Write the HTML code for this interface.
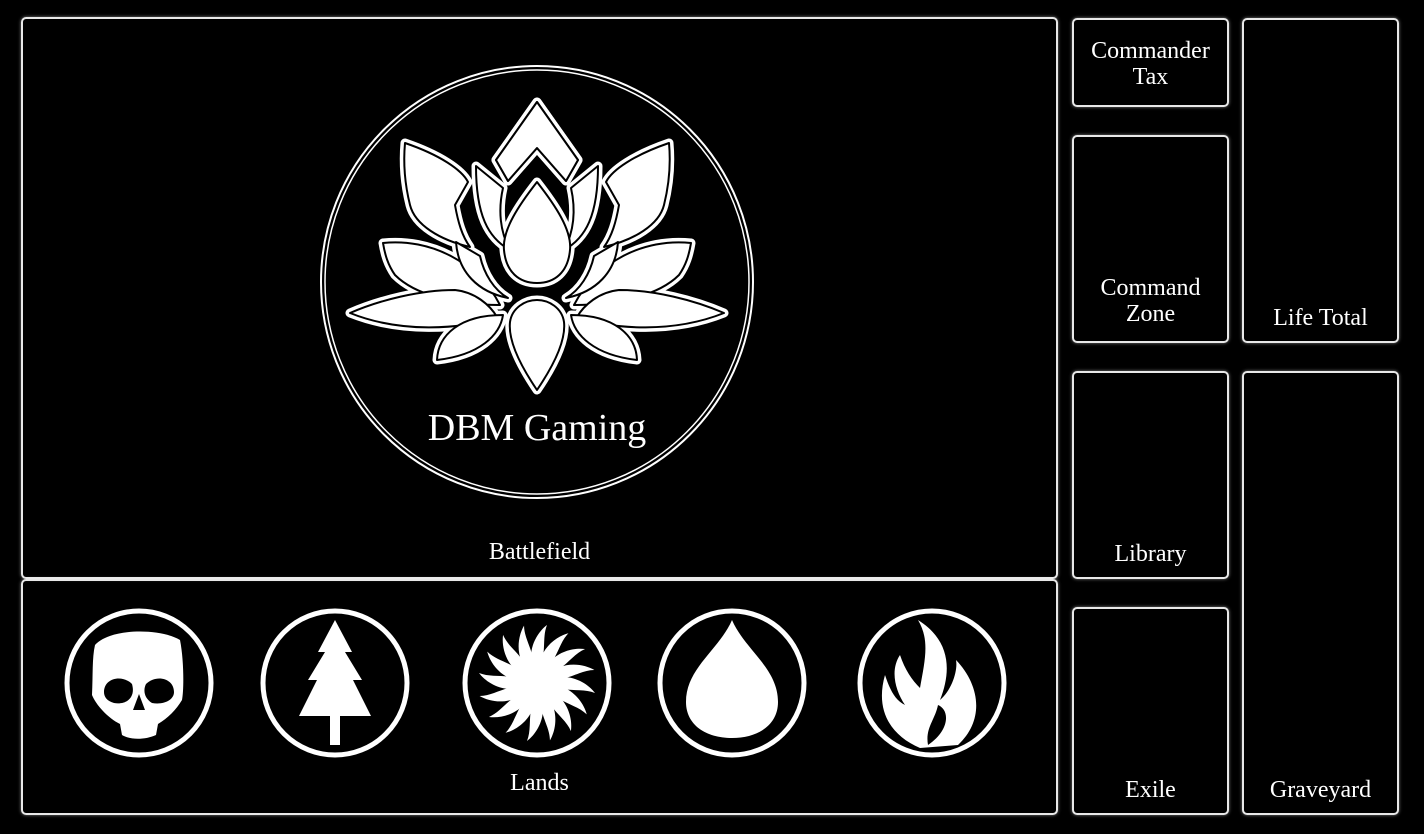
<!DOCTYPE html>
<html><head><meta charset="utf-8"><style>
html,body{margin:0;padding:0;background:#000;}
body{width:1424px;height:834px;position:relative;overflow:hidden;font-family:"Liberation Serif",serif;color:#fff;}
.b{position:absolute;border:2px solid #e8e8e8;border-radius:5px;box-shadow:0 0 3px rgba(255,255,255,.5);box-sizing:border-box;}
.t{position:absolute;width:100%;text-align:center;font-size:24px;line-height:26px;}
</style></head><body>
<div class="b" style="left:21px;top:17px;width:1037px;height:562px;"><div class="t" style="top:520px;">Battlefield</div></div>
<div class="b" style="left:21px;top:579px;width:1037px;height:236px;"><div class="t" style="top:189px;">Lands</div></div>
<div class="b" style="left:1072px;top:18px;width:157px;height:89px;"><div class="t" style="top:18px;">Commander<br>Tax</div></div>
<div class="b" style="left:1072px;top:135px;width:157px;height:208px;"><div class="t" style="top:138px;">Command<br>Zone</div></div>
<div class="b" style="left:1242px;top:18px;width:157px;height:325px;"><div class="t" style="top:285px;">Life Total</div></div>
<div class="b" style="left:1072px;top:371px;width:157px;height:208px;"><div class="t" style="top:168px;">Library</div></div>
<div class="b" style="left:1242px;top:371px;width:157px;height:444px;"><div class="t" style="top:404px;">Graveyard</div></div>
<div class="b" style="left:1072px;top:607px;width:157px;height:208px;"><div class="t" style="top:168px;">Exile</div></div>
<svg width="1424" height="834" style="position:absolute;left:0;top:0" xmlns="http://www.w3.org/2000/svg">
<circle cx="537" cy="282" r="216" fill="none" stroke="#fff" stroke-width="2"/>
<circle cx="537" cy="282" r="212" fill="none" stroke="#fff" stroke-width="1.5"/>
<defs>
<g id="half">
<path d="M537,102 L578,160 L566,181 L537,148 L508,181 L496,160Z"/>
<path d="M476,166 L503,188 C498,210 500,232 510,250 C488,238 476,215 476,166Z"/>
<path d="M405,143 C440,155 462,170 468,182 L455,205 C458,222 462,236 470,247 C440,240 415,225 410,205 C405,185 403,165 405,143Z"/>
<path d="M383,243 C430,238 478,262 500,305 C455,305 415,295 395,275 C388,265 385,255 383,243Z"/>
<path d="M456,242 L480,256 C484,274 494,290 508,298 C478,292 458,272 456,242Z"/>
<path d="M350,313 C380,300 420,290 455,290 C475,292 490,305 497,317 C460,330 400,333 350,313Z"/>
<path d="M437,360 C438,335 460,315 503,315 C500,335 480,355 437,360Z"/>
</g>
<g id="drops">
<path d="M537,182 C555,205 572,230 570,250 C568,272 555,283 537,283 C519,283 506,272 504,250 C502,230 519,205 537,182Z"/>
<path d="M537,390 C520,365 508,340 510,322 C512,308 525,300 537,300 C549,300 562,308 564,322 C566,340 554,365 537,390Z"/>
</g>
</defs>
<g fill="#fff" stroke="#fff" stroke-width="9" stroke-linejoin="round">
<use href="#half"/><use href="#half" transform="translate(1074,0) scale(-1,1)"/><use href="#drops"/>
</g>
<g fill="#fff" stroke="#000" stroke-width="2" stroke-linejoin="round">
<use href="#half"/><use href="#half" transform="translate(1074,0) scale(-1,1)"/><use href="#drops"/>
</g>
<text x="537" y="440" text-anchor="middle" font-family="Liberation Serif" font-size="38" fill="#fff">DBM Gaming</text>
<g fill="none" stroke="#fff" stroke-width="5">
<circle cx="139" cy="683" r="72"/><circle cx="335" cy="683" r="72"/><circle cx="537" cy="683" r="72"/><circle cx="732" cy="683" r="72"/><circle cx="932" cy="683" r="72"/>
</g>
<!-- skull -->
<path fill="#fff" fill-rule="evenodd" d="M95,645 C110,628 160,628 180,640 C184,660 184,690 182,700 C176,710 168,718 158,724 L156,735 C145,740 130,740 122,735 L120,724 C108,718 96,705 92,695 C93,675 92,658 95,645Z M104,692 C104,678 122,674 132,684 C136,698 126,705 114,703 C107,701 104,697 104,692Z M146,684 C156,674 174,678 174,692 C174,700 164,705 152,703 C144,698 143,690 146,684Z M139,694 L145,710 L133,710Z"/>
<!-- tree -->
<path fill="#fff" d="M335,620 L352,652 L345,652 L362,680 L353,680 L371,716 L340,716 L340,745 L330,745 L330,716 L299,716 L317,680 L308,680 L325,652 L318,652Z"/>
<!-- sun -->
<g fill="#fff" transform="translate(537,683)">
<circle r="30"/>
<g id="ray"><path d="M-6,-26 C-6,-40 2,-52 10,-58 C6,-48 8,-38 6,-26Z"/></g>
<use href="#ray" transform="rotate(22.5)"/><use href="#ray" transform="rotate(45)"/><use href="#ray" transform="rotate(67.5)"/><use href="#ray" transform="rotate(90)"/><use href="#ray" transform="rotate(112.5)"/><use href="#ray" transform="rotate(135)"/><use href="#ray" transform="rotate(157.5)"/><use href="#ray" transform="rotate(180)"/><use href="#ray" transform="rotate(202.5)"/><use href="#ray" transform="rotate(225)"/><use href="#ray" transform="rotate(247.5)"/><use href="#ray" transform="rotate(270)"/><use href="#ray" transform="rotate(292.5)"/><use href="#ray" transform="rotate(315)"/><use href="#ray" transform="rotate(337.5)"/>
</g>
<!-- drop -->
<path fill="#fff" d="M732,620 C745,650 778,668 778,702 C778,725 758,738 732,738 C706,738 686,725 686,702 C686,668 719,650 732,620Z"/>
<!-- flame -->
<path fill="#fff" d="M918,620 C950,640 952,670 940,700 C952,690 958,670 956,660 C980,685 985,720 958,745 L920,748 C890,735 875,710 885,675 C890,690 895,700 905,705 C895,690 890,670 900,655 C905,670 912,680 920,688 C925,660 930,640 918,620Z M928,745 C950,730 950,710 938,705 C935,720 925,728 928,745Z"/>
</svg>
</body></html>
